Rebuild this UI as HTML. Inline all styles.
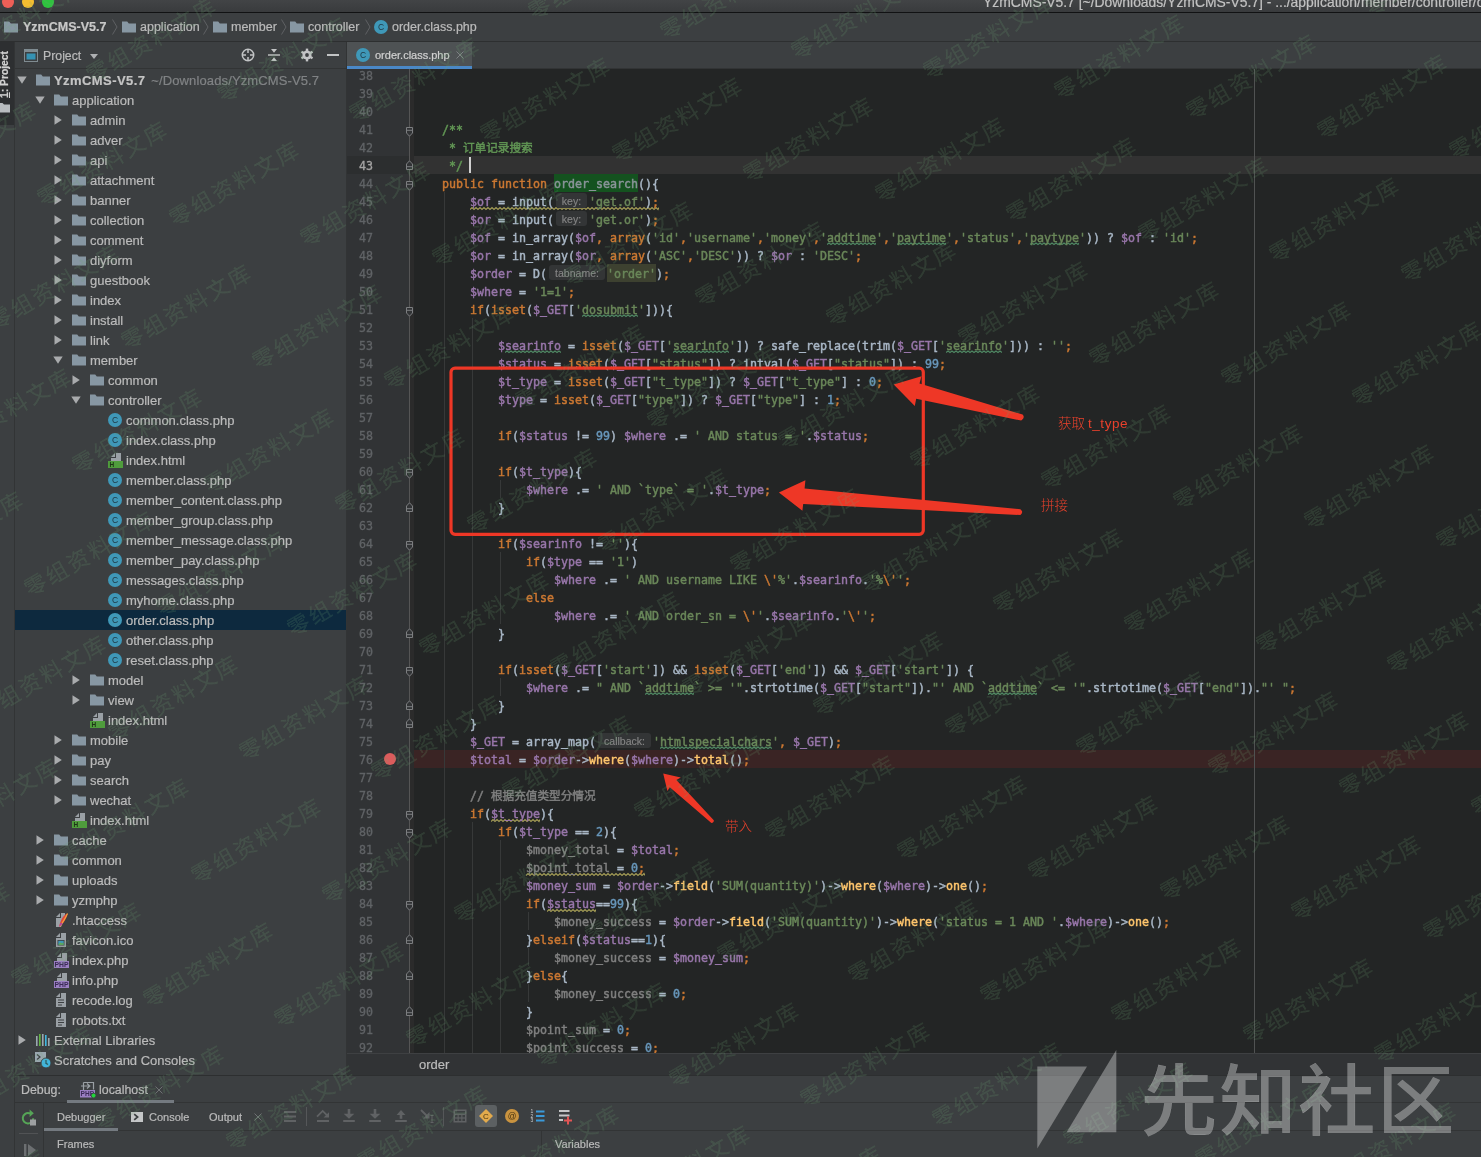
<!DOCTYPE html><html><head><meta charset="utf-8"><title>order.class.php</title><style>
html,body{margin:0;padding:0}
body{width:1481px;height:1157px;overflow:hidden;background:#3c3f41;position:relative;font-family:"Liberation Sans","Noto Sans CJK SC",sans-serif;font-size:13px;color:#bbbbbb;-webkit-text-stroke:0.2px}
div,span,svg{box-sizing:border-box}
.a{position:absolute}
#root{left:0;top:0;width:1481px;height:1157px;overflow:hidden;will-change:transform}
#title{left:0;top:0;width:1481px;height:12px;background:linear-gradient(#424446,#393b3d)}
#titleline{left:0;top:12px;width:1481px;height:1px;background:#111213}
#titletxt{left:983px;top:-6.5px;font-size:13.9px;color:#c2c2c2;white-space:nowrap}
.tl{position:absolute;width:12px;height:12px;border-radius:6px;top:-4px}
#nav{left:0;top:13px;width:1481px;height:28px;background:#3c3f41}
#navline{left:0;top:41px;width:1481px;height:1px;background:#2d2f30}
.crumb{position:absolute;top:0;height:28px;line-height:28px;white-space:nowrap;font-size:12.5px;color:#bbbbbb}
#strip{left:0;top:42px;width:14px;height:1115px;background:#3c3f41}
#stripline{left:14px;top:42px;width:1px;height:1115px;background:#323435}
#stripbtn{left:0;top:42px;width:14px;height:83px;background:#2d2f31}
#striptxt{left:-26px;top:61px;width:62px;height:12px;line-height:12px;font-size:10.3px;font-weight:bold;color:#d0d0d0;transform:rotate(-90deg);white-space:nowrap;text-align:left}
#phead{left:15px;top:42px;width:332px;height:26px;background:#3c3f41}
#pheadline{left:15px;top:68px;width:332px;height:1px;background:#323435}
#tree{left:15px;top:69px;width:332px;height:1006px;overflow:hidden;background:#3c3f41}
.row{position:absolute;left:0;width:331px;height:20px;line-height:20px;white-space:nowrap;color:#bbbbbb;font-size:13px}
.row.sel{background:#0d293e}
.row b{color:#c4c4c4}
.row .path{color:#808385;margin-left:6px;letter-spacing:0.12px}
.arw,.icw,.lbl{position:absolute;top:0;height:20px}
.arw svg,.icw svg{position:absolute;left:0;top:50%;transform:translateY(-50%)}
.lbl{top:1px}
.lbl b{letter-spacing:0.42px}
#split{left:346px;top:42px;width:1px;height:1033px;background:#323435}
#tabs{left:347px;top:42px;width:1134px;height:27px;background:#3c3f41}
#tabsline{left:347px;top:68px;width:1134px;height:1px;background:#323435}
#tab{left:347px;top:42px;width:125px;height:24px;background:#4e5254}
#tabul{left:347px;top:66px;width:125px;height:3px;background:#4a88c7}
#tabtxt{left:375px;top:42px;height:26px;line-height:26px;font-size:11px;color:#d2d2d2;white-space:nowrap}
#editor{left:347px;top:69px;width:1134px;height:984px;overflow:hidden;background:#232525}
#gutter{left:0;top:0;width:67px;height:984px;background:#313335}
#foldline{left:62px;top:0;width:1px;height:984px;background:#555555}
#foldstrip{left:63px;top:0;width:4px;height:984px;background:#2b2b2b}
#code{left:67px;top:0;width:1067px;height:984px}
.mono,.ln,.num{font-family:"DejaVu Sans Mono","Liberation Mono","Noto Sans CJK SC",monospace;font-size:11.63px}
.ln{position:absolute;left:0;width:1067px;height:18px;line-height:18px;white-space:pre;color:#a9b7c6;-webkit-text-stroke:0.45px}
.lbg{position:absolute;left:0;width:1067px;height:18px}
.tx{position:relative;top:1px}
.wv{position:absolute;top:0}
.num{position:absolute;left:0;width:26px;text-align:right;height:18px;line-height:18px;color:#606366;-webkit-text-stroke:0.3px}
.num.cur{color:#a4a3a3}
.fold{position:absolute;left:59px}
.guide{position:absolute;width:1px;background:#373939}
#margin{left:840px;top:0;width:1px;height:984px;background:#505252}
.k{color:#cc7832}.v{color:#9876aa}.s{color:#6a8759}.n{color:#6897bb}.f{color:#ffc66d}.d{color:#629755}.c{color:#808080}.g{color:#808080}
.fn{color:#8a9499}
.shl{color:#6a8759}
.hint{display:inline-block;height:15px;margin:0 2px;vertical-align:top;margin-top:0;background:#333536;border-radius:3px;text-align:center;line-height:16px;font-family:"Liberation Sans",sans-serif;font-size:10.5px;color:#858585;-webkit-text-stroke:0.15px}
.hint span{display:inline-block}
.caret{display:inline-block;width:2px;height:16px;background:#d0d0d0;vertical-align:top;margin:0 0 0 6px}
#bc{left:347px;top:1053px;width:1134px;height:22px;background:#313335}
#bcline{left:0;top:0;width:1134px;height:1px;background:#3e4042}
#bctxt{left:72px;top:0;height:22px;line-height:23px;font-size:13px;color:#bbbbbb}
#dbgline0{left:15px;top:1075px;width:1466px;height:1px;background:#2d2f30}
#dbg{left:15px;top:1076px;width:1466px;height:81px;background:#3c3f41}

.dt{color:#bbbbbb;white-space:nowrap}
.ann{-webkit-text-stroke:0;color:#e9412c;font-size:13.5px;line-height:20px;height:20px;white-space:nowrap;font-family:"Liberation Sans","Noto Sans CJK SC",sans-serif;font-weight:300}
#wm{left:0;top:0;width:1481px;height:1157px;overflow:hidden;pointer-events:none}
.wm{position:absolute;width:170px;height:28px;line-height:28px;font-size:22px;letter-spacing:2.6px;white-space:nowrap;color:rgba(110,165,120,0.17);transform-origin:11px 14px;transform:rotate(-30deg);font-family:"Liberation Sans","Noto Sans CJK SC",sans-serif;font-weight:400}
#logotxt{left:1140.5px;top:1046.5px;height:110px;line-height:110px;font-size:77px;letter-spacing:1.9px;color:rgba(255,255,255,0.33);white-space:nowrap;font-family:"Liberation Sans","Noto Sans CJK SC",sans-serif;font-weight:500}
</style></head><body><div id="root" class="a"><div id="title" class="a"></div><div class="tl" style="left:2px;background:#ee5f57"></div><div class="tl" style="left:22px;background:#f5bd30"></div><div class="tl" style="left:42px;background:#2ec33e"></div><div id="titletxt" class="a">YzmCMS-V5.7 [~/Downloads/YzmCMS-V5.7] - .../application/member/controller/order.class.php</div><div id="titleline" class="a"></div><div id="nav" class="a"><span class="a" style="left:4px;top:8px"><svg width="14" height="12" viewBox="0 0 14 12"><path d="M0 0.5H5.2L6.8 2.5H14V11.5H0Z" fill="#8797a3"/></svg></span><span class="crumb" style="left:23px;font-weight:bold;color:#c8c8c8">YzmCMS-V5.7</span><svg class="a" style="left:112px;top:6px" width="6" height="16" viewBox="0 0 6 16"><path d="M0.5 0.5L5 8L0.5 15.5" stroke="#5e6163" fill="none"/></svg><span class="a" style="left:122px;top:8px"><svg width="14" height="12" viewBox="0 0 14 12"><path d="M0 0.5H5.2L6.8 2.5H14V11.5H0Z" fill="#8797a3"/></svg></span><span class="crumb" style="left:140px">application</span><svg class="a" style="left:203px;top:6px" width="6" height="16" viewBox="0 0 6 16"><path d="M0.5 0.5L5 8L0.5 15.5" stroke="#5e6163" fill="none"/></svg><span class="a" style="left:213px;top:8px"><svg width="14" height="12" viewBox="0 0 14 12"><path d="M0 0.5H5.2L6.8 2.5H14V11.5H0Z" fill="#8797a3"/></svg></span><span class="crumb" style="left:231px">member</span><svg class="a" style="left:281px;top:6px" width="6" height="16" viewBox="0 0 6 16"><path d="M0.5 0.5L5 8L0.5 15.5" stroke="#5e6163" fill="none"/></svg><span class="a" style="left:290px;top:8px"><svg width="14" height="12" viewBox="0 0 14 12"><path d="M0 0.5H5.2L6.8 2.5H14V11.5H0Z" fill="#8797a3"/></svg></span><span class="crumb" style="left:308px">controller</span><svg class="a" style="left:365px;top:6px" width="6" height="16" viewBox="0 0 6 16"><path d="M0.5 0.5L5 8L0.5 15.5" stroke="#5e6163" fill="none"/></svg><span class="a" style="left:374px;top:7px"><svg width="14" height="14" viewBox="0 0 14 14"><circle cx="7" cy="7" r="7" fill="#3f98b8"/><text x="7" y="10" font-size="8.5" font-family="Liberation Sans, sans-serif" fill="#1f3540" text-anchor="middle">C</text></svg></span><span class="crumb" style="left:392px">order.class.php</span></div><div id="navline" class="a"></div><div id="strip" class="a"></div><div id="stripbtn" class="a"></div><div id="stripline" class="a"></div><div id="striptxt" class="a"><u>1</u>: Project</div><svg class="a" style="left:-3px;top:103px" width="14" height="10" viewBox="0 0 14 10"><path d="M0 0H5.5L7 1.5H13V9.5H0Z" fill="#b8bcbf"/></svg><div id="phead" class="a"><svg class="a" style="left:9px;top:7px" width="14" height="13" viewBox="0 0 14 13"><rect x="0.5" y="0.5" width="13" height="12" fill="#3c3f41" stroke="#7f8b91"/><rect x="0.5" y="0.5" width="13" height="2.5" fill="#7f8b91"/><rect x="2.5" y="4.5" width="9" height="6" fill="#3592b3"/></svg><span class="a" style="left:28px;top:0;height:26px;line-height:29px;font-size:12.3px;color:#bbbbbb">Project</span><svg class="a" style="left:75px;top:12px" width="8" height="5" viewBox="0 0 8 5"><path d="M0 0H8L4 5Z" fill="#aeb0b2"/></svg><svg class="a" style="left:226px;top:6px" width="14" height="14" viewBox="0 0 14 14"><circle cx="7" cy="7" r="5.7" fill="none" stroke="#c2c4c5" stroke-width="1.5"/><path d="M7 1V5M7 9V13M1 7H5M9 7H13" stroke="#c2c4c5" stroke-width="1.5"/></svg><svg class="a" style="left:252px;top:6px" width="14" height="14" viewBox="0 0 14 14"><path d="M1 7H13" stroke="#c2c4c5" stroke-width="1.4"/><path d="M4 1H10L7 4.8Z M4 13H10L7 9.2Z" fill="#c2c4c5"/></svg><svg class="a" style="left:285px;top:6px" width="14" height="14" viewBox="0 0 14 14"><g fill="#c2c4c5"><circle cx="7" cy="7" r="4.6"/><rect x="5.8" y="0.6" width="2.4" height="12.8"/><rect x="5.8" y="0.6" width="2.4" height="12.8" transform="rotate(60 7 7)"/><rect x="5.8" y="0.6" width="2.4" height="12.8" transform="rotate(120 7 7)"/></g><circle cx="7" cy="7" r="1.9" fill="#3c3f41"/></svg><div class="a" style="left:312px;top:12px;width:12px;height:2px;background:#c2c4c5"></div></div><div id="pheadline" class="a"></div><div id="tree" class="a"><div class="row" style="top:1px"><span class="arw" style="left:2px"><svg class="ar" width="10" height="8" viewBox="0 0 10 8"><path d="M0.3 0.5H9.7L5 7.8Z" fill="#a9abad"/></svg></span><span class="icw" style="left:21px"><svg class="ic" width="14" height="12" viewBox="0 0 14 12"><path d="M0 0.5H5.2L6.8 2.5H14V11.5H0Z" fill="#8797a3"/></svg></span><span class="lbl" style="left:39px"><b>YzmCMS-V5.7</b><span class="path">~/Downloads/YzmCMS-V5.7</span></span></div><div class="row" style="top:21px"><span class="arw" style="left:20px"><svg class="ar" width="10" height="8" viewBox="0 0 10 8"><path d="M0.3 0.5H9.7L5 7.8Z" fill="#a9abad"/></svg></span><span class="icw" style="left:39px"><svg class="ic" width="14" height="12" viewBox="0 0 14 12"><path d="M0 0.5H5.2L6.8 2.5H14V11.5H0Z" fill="#8797a3"/></svg></span><span class="lbl" style="left:57px">application</span></div><div class="row" style="top:41px"><span class="arw" style="left:39px"><svg class="ar" width="8" height="10" viewBox="0 0 8 10"><path d="M0.5 0.3V9.7L7.8 5Z" fill="#a9abad"/></svg></span><span class="icw" style="left:57px"><svg class="ic" width="14" height="12" viewBox="0 0 14 12"><path d="M0 0.5H5.2L6.8 2.5H14V11.5H0Z" fill="#8797a3"/></svg></span><span class="lbl" style="left:75px">admin</span></div><div class="row" style="top:61px"><span class="arw" style="left:39px"><svg class="ar" width="8" height="10" viewBox="0 0 8 10"><path d="M0.5 0.3V9.7L7.8 5Z" fill="#a9abad"/></svg></span><span class="icw" style="left:57px"><svg class="ic" width="14" height="12" viewBox="0 0 14 12"><path d="M0 0.5H5.2L6.8 2.5H14V11.5H0Z" fill="#8797a3"/></svg></span><span class="lbl" style="left:75px">adver</span></div><div class="row" style="top:81px"><span class="arw" style="left:39px"><svg class="ar" width="8" height="10" viewBox="0 0 8 10"><path d="M0.5 0.3V9.7L7.8 5Z" fill="#a9abad"/></svg></span><span class="icw" style="left:57px"><svg class="ic" width="14" height="12" viewBox="0 0 14 12"><path d="M0 0.5H5.2L6.8 2.5H14V11.5H0Z" fill="#8797a3"/></svg></span><span class="lbl" style="left:75px">api</span></div><div class="row" style="top:101px"><span class="arw" style="left:39px"><svg class="ar" width="8" height="10" viewBox="0 0 8 10"><path d="M0.5 0.3V9.7L7.8 5Z" fill="#a9abad"/></svg></span><span class="icw" style="left:57px"><svg class="ic" width="14" height="12" viewBox="0 0 14 12"><path d="M0 0.5H5.2L6.8 2.5H14V11.5H0Z" fill="#8797a3"/></svg></span><span class="lbl" style="left:75px">attachment</span></div><div class="row" style="top:121px"><span class="arw" style="left:39px"><svg class="ar" width="8" height="10" viewBox="0 0 8 10"><path d="M0.5 0.3V9.7L7.8 5Z" fill="#a9abad"/></svg></span><span class="icw" style="left:57px"><svg class="ic" width="14" height="12" viewBox="0 0 14 12"><path d="M0 0.5H5.2L6.8 2.5H14V11.5H0Z" fill="#8797a3"/></svg></span><span class="lbl" style="left:75px">banner</span></div><div class="row" style="top:141px"><span class="arw" style="left:39px"><svg class="ar" width="8" height="10" viewBox="0 0 8 10"><path d="M0.5 0.3V9.7L7.8 5Z" fill="#a9abad"/></svg></span><span class="icw" style="left:57px"><svg class="ic" width="14" height="12" viewBox="0 0 14 12"><path d="M0 0.5H5.2L6.8 2.5H14V11.5H0Z" fill="#8797a3"/></svg></span><span class="lbl" style="left:75px">collection</span></div><div class="row" style="top:161px"><span class="arw" style="left:39px"><svg class="ar" width="8" height="10" viewBox="0 0 8 10"><path d="M0.5 0.3V9.7L7.8 5Z" fill="#a9abad"/></svg></span><span class="icw" style="left:57px"><svg class="ic" width="14" height="12" viewBox="0 0 14 12"><path d="M0 0.5H5.2L6.8 2.5H14V11.5H0Z" fill="#8797a3"/></svg></span><span class="lbl" style="left:75px">comment</span></div><div class="row" style="top:181px"><span class="arw" style="left:39px"><svg class="ar" width="8" height="10" viewBox="0 0 8 10"><path d="M0.5 0.3V9.7L7.8 5Z" fill="#a9abad"/></svg></span><span class="icw" style="left:57px"><svg class="ic" width="14" height="12" viewBox="0 0 14 12"><path d="M0 0.5H5.2L6.8 2.5H14V11.5H0Z" fill="#8797a3"/></svg></span><span class="lbl" style="left:75px">diyform</span></div><div class="row" style="top:201px"><span class="arw" style="left:39px"><svg class="ar" width="8" height="10" viewBox="0 0 8 10"><path d="M0.5 0.3V9.7L7.8 5Z" fill="#a9abad"/></svg></span><span class="icw" style="left:57px"><svg class="ic" width="14" height="12" viewBox="0 0 14 12"><path d="M0 0.5H5.2L6.8 2.5H14V11.5H0Z" fill="#8797a3"/></svg></span><span class="lbl" style="left:75px">guestbook</span></div><div class="row" style="top:221px"><span class="arw" style="left:39px"><svg class="ar" width="8" height="10" viewBox="0 0 8 10"><path d="M0.5 0.3V9.7L7.8 5Z" fill="#a9abad"/></svg></span><span class="icw" style="left:57px"><svg class="ic" width="14" height="12" viewBox="0 0 14 12"><path d="M0 0.5H5.2L6.8 2.5H14V11.5H0Z" fill="#8797a3"/></svg></span><span class="lbl" style="left:75px">index</span></div><div class="row" style="top:241px"><span class="arw" style="left:39px"><svg class="ar" width="8" height="10" viewBox="0 0 8 10"><path d="M0.5 0.3V9.7L7.8 5Z" fill="#a9abad"/></svg></span><span class="icw" style="left:57px"><svg class="ic" width="14" height="12" viewBox="0 0 14 12"><path d="M0 0.5H5.2L6.8 2.5H14V11.5H0Z" fill="#8797a3"/></svg></span><span class="lbl" style="left:75px">install</span></div><div class="row" style="top:261px"><span class="arw" style="left:39px"><svg class="ar" width="8" height="10" viewBox="0 0 8 10"><path d="M0.5 0.3V9.7L7.8 5Z" fill="#a9abad"/></svg></span><span class="icw" style="left:57px"><svg class="ic" width="14" height="12" viewBox="0 0 14 12"><path d="M0 0.5H5.2L6.8 2.5H14V11.5H0Z" fill="#8797a3"/></svg></span><span class="lbl" style="left:75px">link</span></div><div class="row" style="top:281px"><span class="arw" style="left:38px"><svg class="ar" width="10" height="8" viewBox="0 0 10 8"><path d="M0.3 0.5H9.7L5 7.8Z" fill="#a9abad"/></svg></span><span class="icw" style="left:57px"><svg class="ic" width="14" height="12" viewBox="0 0 14 12"><path d="M0 0.5H5.2L6.8 2.5H14V11.5H0Z" fill="#8797a3"/></svg></span><span class="lbl" style="left:75px">member</span></div><div class="row" style="top:301px"><span class="arw" style="left:57px"><svg class="ar" width="8" height="10" viewBox="0 0 8 10"><path d="M0.5 0.3V9.7L7.8 5Z" fill="#a9abad"/></svg></span><span class="icw" style="left:75px"><svg class="ic" width="14" height="12" viewBox="0 0 14 12"><path d="M0 0.5H5.2L6.8 2.5H14V11.5H0Z" fill="#8797a3"/></svg></span><span class="lbl" style="left:93px">common</span></div><div class="row" style="top:321px"><span class="arw" style="left:56px"><svg class="ar" width="10" height="8" viewBox="0 0 10 8"><path d="M0.3 0.5H9.7L5 7.8Z" fill="#a9abad"/></svg></span><span class="icw" style="left:75px"><svg class="ic" width="14" height="12" viewBox="0 0 14 12"><path d="M0 0.5H5.2L6.8 2.5H14V11.5H0Z" fill="#8797a3"/></svg></span><span class="lbl" style="left:93px">controller</span></div><div class="row" style="top:341px"><span class="icw" style="left:93px"><svg class="ic" width="14" height="14" viewBox="0 0 14 14"><circle cx="7" cy="7" r="7" fill="#3f98b8"/><text x="7" y="10" font-size="8.5" font-family="Liberation Sans, sans-serif" fill="#1f3540" text-anchor="middle">C</text></svg></span><span class="lbl" style="left:111px">common.class.php</span></div><div class="row" style="top:361px"><span class="icw" style="left:93px"><svg class="ic" width="14" height="14" viewBox="0 0 14 14"><circle cx="7" cy="7" r="7" fill="#3f98b8"/><text x="7" y="10" font-size="8.5" font-family="Liberation Sans, sans-serif" fill="#1f3540" text-anchor="middle">C</text></svg></span><span class="lbl" style="left:111px">index.class.php</span></div><div class="row" style="top:381px"><span class="icw" style="left:93px"><svg class="ic" width="16" height="16" viewBox="0 0 16 16"><path d="M8 1H13V10H3V6H8Z" fill="#9aa0a5"/><path d="M3 5L7 1V5Z" fill="#9aa0a5"/><rect x="0" y="9" width="15" height="7" fill="#4f9c3c"/><text x="1.5" y="15" font-size="6.5" font-weight="bold" font-family="Liberation Sans, sans-serif" fill="#1e3317">H</text></svg></span><span class="lbl" style="left:111px">index.html</span></div><div class="row" style="top:401px"><span class="icw" style="left:93px"><svg class="ic" width="14" height="14" viewBox="0 0 14 14"><circle cx="7" cy="7" r="7" fill="#3f98b8"/><text x="7" y="10" font-size="8.5" font-family="Liberation Sans, sans-serif" fill="#1f3540" text-anchor="middle">C</text></svg></span><span class="lbl" style="left:111px">member.class.php</span></div><div class="row" style="top:421px"><span class="icw" style="left:93px"><svg class="ic" width="14" height="14" viewBox="0 0 14 14"><circle cx="7" cy="7" r="7" fill="#3f98b8"/><text x="7" y="10" font-size="8.5" font-family="Liberation Sans, sans-serif" fill="#1f3540" text-anchor="middle">C</text></svg></span><span class="lbl" style="left:111px">member_content.class.php</span></div><div class="row" style="top:441px"><span class="icw" style="left:93px"><svg class="ic" width="14" height="14" viewBox="0 0 14 14"><circle cx="7" cy="7" r="7" fill="#3f98b8"/><text x="7" y="10" font-size="8.5" font-family="Liberation Sans, sans-serif" fill="#1f3540" text-anchor="middle">C</text></svg></span><span class="lbl" style="left:111px">member_group.class.php</span></div><div class="row" style="top:461px"><span class="icw" style="left:93px"><svg class="ic" width="14" height="14" viewBox="0 0 14 14"><circle cx="7" cy="7" r="7" fill="#3f98b8"/><text x="7" y="10" font-size="8.5" font-family="Liberation Sans, sans-serif" fill="#1f3540" text-anchor="middle">C</text></svg></span><span class="lbl" style="left:111px">member_message.class.php</span></div><div class="row" style="top:481px"><span class="icw" style="left:93px"><svg class="ic" width="14" height="14" viewBox="0 0 14 14"><circle cx="7" cy="7" r="7" fill="#3f98b8"/><text x="7" y="10" font-size="8.5" font-family="Liberation Sans, sans-serif" fill="#1f3540" text-anchor="middle">C</text></svg></span><span class="lbl" style="left:111px">member_pay.class.php</span></div><div class="row" style="top:501px"><span class="icw" style="left:93px"><svg class="ic" width="14" height="14" viewBox="0 0 14 14"><circle cx="7" cy="7" r="7" fill="#3f98b8"/><text x="7" y="10" font-size="8.5" font-family="Liberation Sans, sans-serif" fill="#1f3540" text-anchor="middle">C</text></svg></span><span class="lbl" style="left:111px">messages.class.php</span></div><div class="row" style="top:521px"><span class="icw" style="left:93px"><svg class="ic" width="14" height="14" viewBox="0 0 14 14"><circle cx="7" cy="7" r="7" fill="#3f98b8"/><text x="7" y="10" font-size="8.5" font-family="Liberation Sans, sans-serif" fill="#1f3540" text-anchor="middle">C</text></svg></span><span class="lbl" style="left:111px">myhome.class.php</span></div><div class="row sel" style="top:541px"><span class="icw" style="left:93px"><svg class="ic" width="14" height="14" viewBox="0 0 14 14"><circle cx="7" cy="7" r="7" fill="#3f98b8"/><text x="7" y="10" font-size="8.5" font-family="Liberation Sans, sans-serif" fill="#1f3540" text-anchor="middle">C</text></svg></span><span class="lbl" style="left:111px">order.class.php</span></div><div class="row" style="top:561px"><span class="icw" style="left:93px"><svg class="ic" width="14" height="14" viewBox="0 0 14 14"><circle cx="7" cy="7" r="7" fill="#3f98b8"/><text x="7" y="10" font-size="8.5" font-family="Liberation Sans, sans-serif" fill="#1f3540" text-anchor="middle">C</text></svg></span><span class="lbl" style="left:111px">other.class.php</span></div><div class="row" style="top:581px"><span class="icw" style="left:93px"><svg class="ic" width="14" height="14" viewBox="0 0 14 14"><circle cx="7" cy="7" r="7" fill="#3f98b8"/><text x="7" y="10" font-size="8.5" font-family="Liberation Sans, sans-serif" fill="#1f3540" text-anchor="middle">C</text></svg></span><span class="lbl" style="left:111px">reset.class.php</span></div><div class="row" style="top:601px"><span class="arw" style="left:57px"><svg class="ar" width="8" height="10" viewBox="0 0 8 10"><path d="M0.5 0.3V9.7L7.8 5Z" fill="#a9abad"/></svg></span><span class="icw" style="left:75px"><svg class="ic" width="14" height="12" viewBox="0 0 14 12"><path d="M0 0.5H5.2L6.8 2.5H14V11.5H0Z" fill="#8797a3"/></svg></span><span class="lbl" style="left:93px">model</span></div><div class="row" style="top:621px"><span class="arw" style="left:57px"><svg class="ar" width="8" height="10" viewBox="0 0 8 10"><path d="M0.5 0.3V9.7L7.8 5Z" fill="#a9abad"/></svg></span><span class="icw" style="left:75px"><svg class="ic" width="14" height="12" viewBox="0 0 14 12"><path d="M0 0.5H5.2L6.8 2.5H14V11.5H0Z" fill="#8797a3"/></svg></span><span class="lbl" style="left:93px">view</span></div><div class="row" style="top:641px"><span class="icw" style="left:75px"><svg class="ic" width="16" height="16" viewBox="0 0 16 16"><path d="M8 1H13V10H3V6H8Z" fill="#9aa0a5"/><path d="M3 5L7 1V5Z" fill="#9aa0a5"/><rect x="0" y="9" width="15" height="7" fill="#4f9c3c"/><text x="1.5" y="15" font-size="6.5" font-weight="bold" font-family="Liberation Sans, sans-serif" fill="#1e3317">H</text></svg></span><span class="lbl" style="left:93px">index.html</span></div><div class="row" style="top:661px"><span class="arw" style="left:39px"><svg class="ar" width="8" height="10" viewBox="0 0 8 10"><path d="M0.5 0.3V9.7L7.8 5Z" fill="#a9abad"/></svg></span><span class="icw" style="left:57px"><svg class="ic" width="14" height="12" viewBox="0 0 14 12"><path d="M0 0.5H5.2L6.8 2.5H14V11.5H0Z" fill="#8797a3"/></svg></span><span class="lbl" style="left:75px">mobile</span></div><div class="row" style="top:681px"><span class="arw" style="left:39px"><svg class="ar" width="8" height="10" viewBox="0 0 8 10"><path d="M0.5 0.3V9.7L7.8 5Z" fill="#a9abad"/></svg></span><span class="icw" style="left:57px"><svg class="ic" width="14" height="12" viewBox="0 0 14 12"><path d="M0 0.5H5.2L6.8 2.5H14V11.5H0Z" fill="#8797a3"/></svg></span><span class="lbl" style="left:75px">pay</span></div><div class="row" style="top:701px"><span class="arw" style="left:39px"><svg class="ar" width="8" height="10" viewBox="0 0 8 10"><path d="M0.5 0.3V9.7L7.8 5Z" fill="#a9abad"/></svg></span><span class="icw" style="left:57px"><svg class="ic" width="14" height="12" viewBox="0 0 14 12"><path d="M0 0.5H5.2L6.8 2.5H14V11.5H0Z" fill="#8797a3"/></svg></span><span class="lbl" style="left:75px">search</span></div><div class="row" style="top:721px"><span class="arw" style="left:39px"><svg class="ar" width="8" height="10" viewBox="0 0 8 10"><path d="M0.5 0.3V9.7L7.8 5Z" fill="#a9abad"/></svg></span><span class="icw" style="left:57px"><svg class="ic" width="14" height="12" viewBox="0 0 14 12"><path d="M0 0.5H5.2L6.8 2.5H14V11.5H0Z" fill="#8797a3"/></svg></span><span class="lbl" style="left:75px">wechat</span></div><div class="row" style="top:741px"><span class="icw" style="left:57px"><svg class="ic" width="16" height="16" viewBox="0 0 16 16"><path d="M8 1H13V10H3V6H8Z" fill="#9aa0a5"/><path d="M3 5L7 1V5Z" fill="#9aa0a5"/><rect x="0" y="9" width="15" height="7" fill="#4f9c3c"/><text x="1.5" y="15" font-size="6.5" font-weight="bold" font-family="Liberation Sans, sans-serif" fill="#1e3317">H</text></svg></span><span class="lbl" style="left:75px">index.html</span></div><div class="row" style="top:761px"><span class="arw" style="left:21px"><svg class="ar" width="8" height="10" viewBox="0 0 8 10"><path d="M0.5 0.3V9.7L7.8 5Z" fill="#a9abad"/></svg></span><span class="icw" style="left:39px"><svg class="ic" width="14" height="12" viewBox="0 0 14 12"><path d="M0 0.5H5.2L6.8 2.5H14V11.5H0Z" fill="#8797a3"/></svg></span><span class="lbl" style="left:57px">cache</span></div><div class="row" style="top:781px"><span class="arw" style="left:21px"><svg class="ar" width="8" height="10" viewBox="0 0 8 10"><path d="M0.5 0.3V9.7L7.8 5Z" fill="#a9abad"/></svg></span><span class="icw" style="left:39px"><svg class="ic" width="14" height="12" viewBox="0 0 14 12"><path d="M0 0.5H5.2L6.8 2.5H14V11.5H0Z" fill="#8797a3"/></svg></span><span class="lbl" style="left:57px">common</span></div><div class="row" style="top:801px"><span class="arw" style="left:21px"><svg class="ar" width="8" height="10" viewBox="0 0 8 10"><path d="M0.5 0.3V9.7L7.8 5Z" fill="#a9abad"/></svg></span><span class="icw" style="left:39px"><svg class="ic" width="14" height="12" viewBox="0 0 14 12"><path d="M0 0.5H5.2L6.8 2.5H14V11.5H0Z" fill="#8797a3"/></svg></span><span class="lbl" style="left:57px">uploads</span></div><div class="row" style="top:821px"><span class="arw" style="left:21px"><svg class="ar" width="8" height="10" viewBox="0 0 8 10"><path d="M0.5 0.3V9.7L7.8 5Z" fill="#a9abad"/></svg></span><span class="icw" style="left:39px"><svg class="ic" width="14" height="12" viewBox="0 0 14 12"><path d="M0 0.5H5.2L6.8 2.5H14V11.5H0Z" fill="#8797a3"/></svg></span><span class="lbl" style="left:57px">yzmphp</span></div><div class="row" style="top:841px"><span class="icw" style="left:38px"><svg class="ic" width="16" height="16" viewBox="0 0 16 16"><path d="M8 1H12V6L8 15H3V6H8Z" fill="#9aa0a5"/><path d="M3 5L7 1V5Z" fill="#9aa0a5"/><path d="M14.5 1.5C11 2.5 8 7 6 14.5L7.5 14C10 11.5 13.5 7 14.5 1.5Z" fill="#e0453a"/><path d="M14.5 1.5C13 5 10 10 7 14.3" stroke="#f3a43b" stroke-width="1.2" fill="none"/><path d="M6 14.5L7.5 14C8.5 12.8 9.3 12 10 11L7.5 11Z" fill="#b3479c"/></svg></span><span class="lbl" style="left:57px">.htaccess</span></div><div class="row" style="top:861px"><span class="icw" style="left:38px"><svg class="ic" width="16" height="16" viewBox="0 0 16 16"><path d="M8 1H13V15H3V6H8Z" fill="#9aa0a5"/><path d="M3 5L7 1V5Z" fill="#9aa0a5"/><rect x="4.5" y="8" width="7" height="5.5" fill="#3c3f41"/><rect x="5.3" y="8.8" width="5.4" height="3.9" fill="#3f98b8"/><path d="M5.3 12.7L7.3 10.5L8.6 11.6L9.6 10.8L10.7 12V12.7Z" fill="#5fae48"/></svg></span><span class="lbl" style="left:57px">favicon.ico</span></div><div class="row" style="top:881px"><span class="icw" style="left:39px"><svg class="ic" width="16" height="16" viewBox="0 0 16 16"><path d="M8 1H13V10H3V6H8Z" fill="#9aa0a5"/><path d="M3 5L7 1V5Z" fill="#9aa0a5"/><rect x="0" y="9" width="15" height="7" fill="#9a7fc2"/><text x="0.5" y="15" font-size="6.5" font-weight="bold" font-family="Liberation Sans, sans-serif" fill="#3a2a55" textLength="14" lengthAdjust="spacingAndGlyphs">PHP</text></svg></span><span class="lbl" style="left:57px">index.php</span></div><div class="row" style="top:901px"><span class="icw" style="left:39px"><svg class="ic" width="16" height="16" viewBox="0 0 16 16"><path d="M8 1H13V10H3V6H8Z" fill="#9aa0a5"/><path d="M3 5L7 1V5Z" fill="#9aa0a5"/><rect x="0" y="9" width="15" height="7" fill="#9a7fc2"/><text x="0.5" y="15" font-size="6.5" font-weight="bold" font-family="Liberation Sans, sans-serif" fill="#3a2a55" textLength="14" lengthAdjust="spacingAndGlyphs">PHP</text></svg></span><span class="lbl" style="left:57px">info.php</span></div><div class="row" style="top:921px"><span class="icw" style="left:38px"><svg class="ic" width="16" height="16" viewBox="0 0 16 16"><path d="M8 1H13V15H3V6H8Z" fill="#9aa0a5"/><path d="M3 5L7 1V5Z" fill="#9aa0a5"/><path d="M5 8H11M5 10.5H11M5 13H9" stroke="#3c3f41" stroke-width="1"/></svg></span><span class="lbl" style="left:57px">recode.log</span></div><div class="row" style="top:941px"><span class="icw" style="left:38px"><svg class="ic" width="16" height="16" viewBox="0 0 16 16"><path d="M8 1H13V15H3V6H8Z" fill="#9aa0a5"/><path d="M3 5L7 1V5Z" fill="#9aa0a5"/><path d="M5 8H11M5 10.5H11M5 13H9" stroke="#3c3f41" stroke-width="1"/></svg></span><span class="lbl" style="left:57px">robots.txt</span></div><div class="row" style="top:961px"><span class="arw" style="left:3px"><svg class="ar" width="8" height="10" viewBox="0 0 8 10"><path d="M0.5 0.3V9.7L7.8 5Z" fill="#a9abad"/></svg></span><span class="icw" style="left:20px"><svg class="ic" width="16" height="16" viewBox="0 0 16 16"><rect x="1" y="4" width="1.6" height="10" fill="#9aa7b0"/><rect x="4" y="2" width="1.6" height="12" fill="#62b543"/><rect x="7" y="2" width="1.6" height="12" fill="#9aa7b0"/><rect x="10" y="3" width="1.6" height="11" fill="#40b6e0"/><rect x="13" y="6" width="1.6" height="8" fill="#9aa7b0"/></svg></span><span class="lbl" style="left:39px">External Libraries</span></div><div class="row" style="top:981px"><span class="icw" style="left:20px"><svg class="ic" width="16" height="16" viewBox="0 0 16 16"><rect x="0" y="0" width="11" height="10" fill="#9aa7b0"/><path d="M2 2.5L5 5L2 7.5" stroke="#3c3f41" stroke-width="1.2" fill="none"/><circle cx="11" cy="11" r="5" fill="#40b6e0" stroke="#3c3f41" stroke-width="1"/><path d="M11 8V11.3L13 12.5" stroke="#1d4a5c" stroke-width="1.2" fill="none"/></svg></span><span class="lbl" style="left:39px">Scratches and Consoles</span></div></div><div id="split" class="a"></div><div id="tabs" class="a"></div><div id="tabsline" class="a"></div><div id="tab" class="a"></div><div id="tabul" class="a"></div><span class="a" style="left:356px;top:48px"><svg width="14" height="14" viewBox="0 0 14 14"><circle cx="7" cy="7" r="7" fill="#3f98b8"/><text x="7" y="10" font-size="8.5" font-family="Liberation Sans, sans-serif" fill="#1f3540" text-anchor="middle">C</text></svg></span><div id="tabtxt" class="a">order.class.php</div><svg class="a" style="left:456px;top:51px" width="8" height="8" viewBox="0 0 8 8"><path d="M0.5 0.5L7.5 7.5M7.5 0.5L0.5 7.5" stroke="#7e8284" stroke-width="1"/></svg><div id="editor" class="a"><div id="gutter" class="a"><div class="a" style="left:0;top:87px;width:67px;height:18px;background:#2c2e2f"></div><div class="num" style="top:-3px"><span class="tx">38</span></div><div class="num" style="top:15px"><span class="tx">39</span></div><div class="num" style="top:33px"><span class="tx">40</span></div><div class="num" style="top:51px"><span class="tx">41</span></div><div class="num" style="top:69px"><span class="tx">42</span></div><div class="num cur" style="top:87px"><span class="tx">43</span></div><div class="num" style="top:105px"><span class="tx">44</span></div><div class="num" style="top:123px"><span class="tx">45</span></div><div class="num" style="top:141px"><span class="tx">46</span></div><div class="num" style="top:159px"><span class="tx">47</span></div><div class="num" style="top:177px"><span class="tx">48</span></div><div class="num" style="top:195px"><span class="tx">49</span></div><div class="num" style="top:213px"><span class="tx">50</span></div><div class="num" style="top:231px"><span class="tx">51</span></div><div class="num" style="top:249px"><span class="tx">52</span></div><div class="num" style="top:267px"><span class="tx">53</span></div><div class="num" style="top:285px"><span class="tx">54</span></div><div class="num" style="top:303px"><span class="tx">55</span></div><div class="num" style="top:321px"><span class="tx">56</span></div><div class="num" style="top:339px"><span class="tx">57</span></div><div class="num" style="top:357px"><span class="tx">58</span></div><div class="num" style="top:375px"><span class="tx">59</span></div><div class="num" style="top:393px"><span class="tx">60</span></div><div class="num" style="top:411px"><span class="tx">61</span></div><div class="num" style="top:429px"><span class="tx">62</span></div><div class="num" style="top:447px"><span class="tx">63</span></div><div class="num" style="top:465px"><span class="tx">64</span></div><div class="num" style="top:483px"><span class="tx">65</span></div><div class="num" style="top:501px"><span class="tx">66</span></div><div class="num" style="top:519px"><span class="tx">67</span></div><div class="num" style="top:537px"><span class="tx">68</span></div><div class="num" style="top:555px"><span class="tx">69</span></div><div class="num" style="top:573px"><span class="tx">70</span></div><div class="num" style="top:591px"><span class="tx">71</span></div><div class="num" style="top:609px"><span class="tx">72</span></div><div class="num" style="top:627px"><span class="tx">73</span></div><div class="num" style="top:645px"><span class="tx">74</span></div><div class="num" style="top:663px"><span class="tx">75</span></div><div class="num" style="top:681px"><span class="tx">76</span></div><div class="num" style="top:699px"><span class="tx">77</span></div><div class="num" style="top:717px"><span class="tx">78</span></div><div class="num" style="top:735px"><span class="tx">79</span></div><div class="num" style="top:753px"><span class="tx">80</span></div><div class="num" style="top:771px"><span class="tx">81</span></div><div class="num" style="top:789px"><span class="tx">82</span></div><div class="num" style="top:807px"><span class="tx">83</span></div><div class="num" style="top:825px"><span class="tx">84</span></div><div class="num" style="top:843px"><span class="tx">85</span></div><div class="num" style="top:861px"><span class="tx">86</span></div><div class="num" style="top:879px"><span class="tx">87</span></div><div class="num" style="top:897px"><span class="tx">88</span></div><div class="num" style="top:915px"><span class="tx">89</span></div><div class="num" style="top:933px"><span class="tx">90</span></div><div class="num" style="top:951px"><span class="tx">91</span></div><div class="num" style="top:969px"><span class="tx">92</span></div><div id="foldstrip" class="a"></div><div id="foldline" class="a"></div><svg class="fold" style="top:58px" width="7" height="10" viewBox="0 0 7 10"><path d="M0.5 0.5H6.5V6L3.5 9.2L0.5 6Z" fill="#313335" stroke="#7c7e80"/><path d="M0.5 3.3H6.5" stroke="#7c7e80"/></svg><svg class="fold" style="top:91px" width="7" height="10" viewBox="0 0 7 10"><path d="M0.5 9.5H6.5V4L3.5 0.8L0.5 4Z" fill="#313335" stroke="#7c7e80"/><path d="M0.5 6.7H6.5" stroke="#7c7e80"/></svg><svg class="fold" style="top:112px" width="7" height="10" viewBox="0 0 7 10"><path d="M0.5 0.5H6.5V6L3.5 9.2L0.5 6Z" fill="#313335" stroke="#7c7e80"/><path d="M0.5 3.3H6.5" stroke="#7c7e80"/></svg><svg class="fold" style="top:238px" width="7" height="10" viewBox="0 0 7 10"><path d="M0.5 0.5H6.5V6L3.5 9.2L0.5 6Z" fill="#313335" stroke="#7c7e80"/><path d="M0.5 3.3H6.5" stroke="#7c7e80"/></svg><svg class="fold" style="top:400px" width="7" height="10" viewBox="0 0 7 10"><path d="M0.5 0.5H6.5V6L3.5 9.2L0.5 6Z" fill="#313335" stroke="#7c7e80"/><path d="M0.5 3.3H6.5" stroke="#7c7e80"/></svg><svg class="fold" style="top:433px" width="7" height="10" viewBox="0 0 7 10"><path d="M0.5 9.5H6.5V4L3.5 0.8L0.5 4Z" fill="#313335" stroke="#7c7e80"/><path d="M0.5 6.7H6.5" stroke="#7c7e80"/></svg><svg class="fold" style="top:472px" width="7" height="10" viewBox="0 0 7 10"><path d="M0.5 0.5H6.5V6L3.5 9.2L0.5 6Z" fill="#313335" stroke="#7c7e80"/><path d="M0.5 3.3H6.5" stroke="#7c7e80"/></svg><svg class="fold" style="top:559px" width="7" height="10" viewBox="0 0 7 10"><path d="M0.5 9.5H6.5V4L3.5 0.8L0.5 4Z" fill="#313335" stroke="#7c7e80"/><path d="M0.5 6.7H6.5" stroke="#7c7e80"/></svg><svg class="fold" style="top:598px" width="7" height="10" viewBox="0 0 7 10"><path d="M0.5 0.5H6.5V6L3.5 9.2L0.5 6Z" fill="#313335" stroke="#7c7e80"/><path d="M0.5 3.3H6.5" stroke="#7c7e80"/></svg><svg class="fold" style="top:631px" width="7" height="10" viewBox="0 0 7 10"><path d="M0.5 9.5H6.5V4L3.5 0.8L0.5 4Z" fill="#313335" stroke="#7c7e80"/><path d="M0.5 6.7H6.5" stroke="#7c7e80"/></svg><svg class="fold" style="top:649px" width="7" height="10" viewBox="0 0 7 10"><path d="M0.5 9.5H6.5V4L3.5 0.8L0.5 4Z" fill="#313335" stroke="#7c7e80"/><path d="M0.5 6.7H6.5" stroke="#7c7e80"/></svg><svg class="fold" style="top:742px" width="7" height="10" viewBox="0 0 7 10"><path d="M0.5 0.5H6.5V6L3.5 9.2L0.5 6Z" fill="#313335" stroke="#7c7e80"/><path d="M0.5 3.3H6.5" stroke="#7c7e80"/></svg><svg class="fold" style="top:760px" width="7" height="10" viewBox="0 0 7 10"><path d="M0.5 0.5H6.5V6L3.5 9.2L0.5 6Z" fill="#313335" stroke="#7c7e80"/><path d="M0.5 3.3H6.5" stroke="#7c7e80"/></svg><svg class="fold" style="top:832px" width="7" height="10" viewBox="0 0 7 10"><path d="M0.5 0.5H6.5V6L3.5 9.2L0.5 6Z" fill="#313335" stroke="#7c7e80"/><path d="M0.5 3.3H6.5" stroke="#7c7e80"/></svg><svg class="fold" style="top:865px" width="7" height="10" viewBox="0 0 7 10"><path d="M0.5 9.5H6.5V4L3.5 0.8L0.5 4Z" fill="#313335" stroke="#7c7e80"/><path d="M0.5 6.7H6.5" stroke="#7c7e80"/></svg><svg class="fold" style="top:901px" width="7" height="10" viewBox="0 0 7 10"><path d="M0.5 9.5H6.5V4L3.5 0.8L0.5 4Z" fill="#313335" stroke="#7c7e80"/><path d="M0.5 6.7H6.5" stroke="#7c7e80"/></svg><svg class="fold" style="top:937px" width="7" height="10" viewBox="0 0 7 10"><path d="M0.5 9.5H6.5V4L3.5 0.8L0.5 4Z" fill="#313335" stroke="#7c7e80"/><path d="M0.5 6.7H6.5" stroke="#7c7e80"/></svg><div class="a" style="left:37px;top:684px;width:12px;height:12px;border-radius:6px;background:#db5c5c"></div></div><div id="code" class="a"><div class="lbg" style="top:87px;background:#323232"></div><div class="lbg" style="top:681px;background:#3a2424"></div><div class="a" style="left:140px;top:105px;width:84px;height:18px;background:#14521f"></div><div class="a" style="left:193px;top:195px;width:49px;height:18px;background:#3d4130"></div><div class="guide" style="left:30px;top:123px;height:864px"></div><div class="guide" style="left:58px;top:249px;height:396px"></div><div class="guide" style="left:58px;top:753px;height:234px"></div><div class="guide" style="left:86px;top:411px;height:18px"></div><div class="guide" style="left:86px;top:483px;height:72px"></div><div class="guide" style="left:86px;top:609px;height:18px"></div><div class="guide" style="left:86px;top:771px;height:216px"></div><div class="guide" style="left:114px;top:843px;height:18px"></div><div class="guide" style="left:114px;top:879px;height:18px"></div><div class="guide" style="left:114px;top:915px;height:18px"></div><div class="ln" style="top:-3px"></div><div class="ln" style="top:15px"></div><div class="ln" style="top:33px"></div><div class="ln" style="top:51px"><span class="tx">    <span class="d">/**</span></span></div><div class="ln" style="top:69px"><span class="tx">     <span class="d">* 订单记录搜索</span></span></div><div class="ln" style="top:87px"><span class="tx">     <span class="d">*/</span><span class="caret"></span></span></div><div class="ln" style="top:105px"><span class="tx">    <span class="k">public function </span><span class="fn">order_search</span>(){</span></div><div class="ln" style="top:123px"><svg class="wv" style="left:56px" width="189" height="19" viewBox="0 0 189 19"><path d="M0 17.5 L2 15.5 L4 17.5 L6 15.5 L8 17.5 L10 15.5 L12 17.5 L14 15.5 L16 17.5 L18 15.5 L20 17.5 L22 15.5 L24 17.5 L26 15.5 L28 17.5 L30 15.5 L32 17.5 L34 15.5 L36 17.5 L38 15.5 L40 17.5 L42 15.5 L44 17.5 L46 15.5 L48 17.5 L50 15.5 L52 17.5 L54 15.5 L56 17.5 L58 15.5 L60 17.5 L62 15.5 L64 17.5 L66 15.5 L68 17.5 L70 15.5 L72 17.5 L74 15.5 L76 17.5 L78 15.5 L80 17.5 L82 15.5 L84 17.5 L86 15.5 L88 17.5 L90 15.5 L92 17.5 L94 15.5 L96 17.5 L98 15.5 L100 17.5 L102 15.5 L104 17.5 L106 15.5 L108 17.5 L110 15.5 L112 17.5 L114 15.5 L116 17.5 L118 15.5 L120 17.5 L122 15.5 L124 17.5 L126 15.5 L128 17.5 L130 15.5 L132 17.5 L134 15.5 L136 17.5 L138 15.5 L140 17.5 L142 15.5 L144 17.5 L146 15.5 L148 17.5 L150 15.5 L152 17.5 L154 15.5 L156 17.5 L158 15.5 L160 17.5 L162 15.5 L164 17.5 L166 15.5 L168 17.5 L170 15.5 L172 17.5 L174 15.5 L176 17.5 L178 15.5 L180 17.5 L182 15.5 L184 17.5 L186 15.5 L188 17.5 L189 15.5" fill="none"  stroke="#a39b55" stroke-width="1.15"/></svg><span class="tx">        <span class="v">$of</span> = input(<span class="hint" style="width:31px"><span>key:</span></span><span class="s">'get.of'</span>)<span class="k">;</span></span></div><div class="ln" style="top:141px"><span class="tx">        <span class="v">$or</span> = input(<span class="hint" style="width:31px"><span>key:</span></span><span class="s">'get.or'</span>)<span class="k">;</span></span></div><div class="ln" style="top:159px"><svg class="wv" style="left:413px" width="49" height="19" viewBox="0 0 49 19"><path d="M0 16.5 L2 15 L4 16.5 L6 15 L8 16.5 L10 15 L12 16.5 L14 15 L16 16.5 L18 15 L20 16.5 L22 15 L24 16.5 L26 15 L28 16.5 L30 15 L32 16.5 L34 15 L36 16.5 L38 15 L40 16.5 L42 15 L44 16.5 L46 15 L48 16.5 L49 15" fill="none"  stroke="#4f8763" stroke-width="1.15"/></svg><svg class="wv" style="left:483px" width="49" height="19" viewBox="0 0 49 19"><path d="M0 16.5 L2 15 L4 16.5 L6 15 L8 16.5 L10 15 L12 16.5 L14 15 L16 16.5 L18 15 L20 16.5 L22 15 L24 16.5 L26 15 L28 16.5 L30 15 L32 16.5 L34 15 L36 16.5 L38 15 L40 16.5 L42 15 L44 16.5 L46 15 L48 16.5 L49 15" fill="none"  stroke="#4f8763" stroke-width="1.15"/></svg><svg class="wv" style="left:616px" width="49" height="19" viewBox="0 0 49 19"><path d="M0 16.5 L2 15 L4 16.5 L6 15 L8 16.5 L10 15 L12 16.5 L14 15 L16 16.5 L18 15 L20 16.5 L22 15 L24 16.5 L26 15 L28 16.5 L30 15 L32 16.5 L34 15 L36 16.5 L38 15 L40 16.5 L42 15 L44 16.5 L46 15 L48 16.5 L49 15" fill="none"  stroke="#4f8763" stroke-width="1.15"/></svg><span class="tx">        <span class="v">$of</span> = in_array(<span class="v">$of</span><span class="k">,</span> <span class="k">array</span>(<span class="s">'id'</span><span class="k">,</span><span class="s">'username'</span><span class="k">,</span><span class="s">'money'</span><span class="k">,</span><span class="s">'</span><span class="s">addtime</span><span class="s">'</span><span class="k">,</span><span class="s">'</span><span class="s">paytime</span><span class="s">'</span><span class="k">,</span><span class="s">'status'</span><span class="k">,</span><span class="s">'</span><span class="s">paytype</span><span class="s">'</span>)) ? <span class="v">$of</span> : <span class="s">'id'</span><span class="k">;</span></span></div><div class="ln" style="top:177px"><span class="tx">        <span class="v">$or</span> = in_array(<span class="v">$or</span><span class="k">,</span> <span class="k">array</span>(<span class="s">'ASC'</span><span class="k">,</span><span class="s">'DESC'</span>)) ? <span class="v">$or</span> : <span class="s">'DESC'</span><span class="k">;</span></span></div><div class="ln" style="top:195px"><span class="tx">        <span class="v">$order</span> = D(<span class="hint" style="width:56px"><span>tabname:</span></span><span class="shl">'order'</span>)<span class="k">;</span></span></div><div class="ln" style="top:213px"><span class="tx">        <span class="v">$where</span> = <span class="s">'1=1'</span><span class="k">;</span></span></div><div class="ln" style="top:231px"><svg class="wv" style="left:168px" width="56" height="19" viewBox="0 0 56 19"><path d="M0 16.5 L2 15 L4 16.5 L6 15 L8 16.5 L10 15 L12 16.5 L14 15 L16 16.5 L18 15 L20 16.5 L22 15 L24 16.5 L26 15 L28 16.5 L30 15 L32 16.5 L34 15 L36 16.5 L38 15 L40 16.5 L42 15 L44 16.5 L46 15 L48 16.5 L50 15 L52 16.5 L54 15 L56 16.5" fill="none"  stroke="#4f8763" stroke-width="1.15"/></svg><span class="tx">        <span class="k">if</span>(<span class="k">isset</span>(<span class="v">$_GET</span>[<span class="s">'</span><span class="s">dosubmit</span><span class="s">'</span>])){</span></div><div class="ln" style="top:249px"></div><div class="ln" style="top:267px"><svg class="wv" style="left:91px" width="56" height="19" viewBox="0 0 56 19"><path d="M0 16.5 L2 15 L4 16.5 L6 15 L8 16.5 L10 15 L12 16.5 L14 15 L16 16.5 L18 15 L20 16.5 L22 15 L24 16.5 L26 15 L28 16.5 L30 15 L32 16.5 L34 15 L36 16.5 L38 15 L40 16.5 L42 15 L44 16.5 L46 15 L48 16.5 L50 15 L52 16.5 L54 15 L56 16.5" fill="none"  stroke="#4f8763" stroke-width="1.15"/></svg><svg class="wv" style="left:259px" width="56" height="19" viewBox="0 0 56 19"><path d="M0 16.5 L2 15 L4 16.5 L6 15 L8 16.5 L10 15 L12 16.5 L14 15 L16 16.5 L18 15 L20 16.5 L22 15 L24 16.5 L26 15 L28 16.5 L30 15 L32 16.5 L34 15 L36 16.5 L38 15 L40 16.5 L42 15 L44 16.5 L46 15 L48 16.5 L50 15 L52 16.5 L54 15 L56 16.5" fill="none"  stroke="#4f8763" stroke-width="1.15"/></svg><svg class="wv" style="left:532px" width="56" height="19" viewBox="0 0 56 19"><path d="M0 16.5 L2 15 L4 16.5 L6 15 L8 16.5 L10 15 L12 16.5 L14 15 L16 16.5 L18 15 L20 16.5 L22 15 L24 16.5 L26 15 L28 16.5 L30 15 L32 16.5 L34 15 L36 16.5 L38 15 L40 16.5 L42 15 L44 16.5 L46 15 L48 16.5 L50 15 L52 16.5 L54 15 L56 16.5" fill="none"  stroke="#4f8763" stroke-width="1.15"/></svg><span class="tx">            <span class="v">$</span><span class="v">searinfo</span> = <span class="k">isset</span>(<span class="v">$_GET</span>[<span class="s">'</span><span class="s">searinfo</span><span class="s">'</span>]) ? safe_replace(trim(<span class="v">$_GET</span>[<span class="s">'</span><span class="s">searinfo</span><span class="s">'</span>])) : <span class="s">''</span><span class="k">;</span></span></div><div class="ln" style="top:285px"><span class="tx">            <span class="v">$status</span> = <span class="k">isset</span>(<span class="v">$_GET</span>[<span class="s">"status"</span>]) ? intval(<span class="v">$_GET</span>[<span class="s">"status"</span>]) : <span class="n">99</span><span class="k">;</span></span></div><div class="ln" style="top:303px"><span class="tx">            <span class="v">$t_type</span> = <span class="k">isset</span>(<span class="v">$_GET</span>[<span class="s">"t_type"</span>]) ? <span class="v">$_GET</span>[<span class="s">"t_type"</span>] : <span class="n">0</span><span class="k">;</span></span></div><div class="ln" style="top:321px"><span class="tx">            <span class="v">$type</span> = <span class="k">isset</span>(<span class="v">$_GET</span>[<span class="s">"type"</span>]) ? <span class="v">$_GET</span>[<span class="s">"type"</span>] : <span class="n">1</span><span class="k">;</span></span></div><div class="ln" style="top:339px"></div><div class="ln" style="top:357px"><span class="tx">            <span class="k">if</span>(<span class="v">$status</span> != <span class="n">99</span>) <span class="v">$where</span> .= <span class="s">' AND status = '</span>.<span class="v">$status</span><span class="k">;</span></span></div><div class="ln" style="top:375px"></div><div class="ln" style="top:393px"><span class="tx">            <span class="k">if</span>(<span class="v">$t_type</span>){</span></div><div class="ln" style="top:411px"><span class="tx">                <span class="v">$where</span> .= <span class="s">' AND `type` = '</span>.<span class="v">$t_type</span><span class="k">;</span></span></div><div class="ln" style="top:429px"><span class="tx">            }</span></div><div class="ln" style="top:447px"></div><div class="ln" style="top:465px"><span class="tx">            <span class="k">if</span>(<span class="v">$searinfo</span> != <span class="s">''</span>){</span></div><div class="ln" style="top:483px"><span class="tx">                <span class="k">if</span>(<span class="v">$type</span> == <span class="s">'1'</span>)</span></div><div class="ln" style="top:501px"><span class="tx">                    <span class="v">$where</span> .= <span class="s">' AND username LIKE </span><span class="k">\'</span><span class="s">%'</span>.<span class="v">$searinfo</span>.<span class="s">'%</span><span class="k">\'</span><span class="s">'</span><span class="k">;</span></span></div><div class="ln" style="top:519px"><span class="tx">                <span class="k">else</span></span></div><div class="ln" style="top:537px"><span class="tx">                    <span class="v">$where</span> .= <span class="s">' AND order_sn = </span><span class="k">\'</span><span class="s">'</span>.<span class="v">$searinfo</span>.<span class="s">'</span><span class="k">\'</span><span class="s">'</span><span class="k">;</span></span></div><div class="ln" style="top:555px"><span class="tx">            }</span></div><div class="ln" style="top:573px"></div><div class="ln" style="top:591px"><span class="tx">            <span class="k">if</span>(<span class="k">isset</span>(<span class="v">$_GET</span>[<span class="s">'start'</span>]) &amp;&amp; <span class="k">isset</span>(<span class="v">$_GET</span>[<span class="s">'end'</span>]) &amp;&amp; <span class="v">$_GET</span>[<span class="s">'start'</span>]) {</span></div><div class="ln" style="top:609px"><svg class="wv" style="left:231px" width="49" height="19" viewBox="0 0 49 19"><path d="M0 16.5 L2 15 L4 16.5 L6 15 L8 16.5 L10 15 L12 16.5 L14 15 L16 16.5 L18 15 L20 16.5 L22 15 L24 16.5 L26 15 L28 16.5 L30 15 L32 16.5 L34 15 L36 16.5 L38 15 L40 16.5 L42 15 L44 16.5 L46 15 L48 16.5 L49 15" fill="none"  stroke="#4f8763" stroke-width="1.15"/></svg><svg class="wv" style="left:574px" width="49" height="19" viewBox="0 0 49 19"><path d="M0 16.5 L2 15 L4 16.5 L6 15 L8 16.5 L10 15 L12 16.5 L14 15 L16 16.5 L18 15 L20 16.5 L22 15 L24 16.5 L26 15 L28 16.5 L30 15 L32 16.5 L34 15 L36 16.5 L38 15 L40 16.5 L42 15 L44 16.5 L46 15 L48 16.5 L49 15" fill="none"  stroke="#4f8763" stroke-width="1.15"/></svg><span class="tx">                <span class="v">$where</span> .= <span class="s">" AND `</span><span class="s">addtime</span><span class="s">` &gt;= '"</span>.strtotime(<span class="v">$_GET</span>[<span class="s">"start"</span>]).<span class="s">"' AND `</span><span class="s">addtime</span><span class="s">` &lt;= '"</span>.strtotime(<span class="v">$_GET</span>[<span class="s">"end"</span>]).<span class="s">"' "</span><span class="k">;</span></span></div><div class="ln" style="top:627px"><span class="tx">            }</span></div><div class="ln" style="top:645px"><span class="tx">        }</span></div><div class="ln" style="top:663px"><svg class="wv" style="left:246px" width="112" height="19" viewBox="0 0 112 19"><path d="M0 16.5 L2 15 L4 16.5 L6 15 L8 16.5 L10 15 L12 16.5 L14 15 L16 16.5 L18 15 L20 16.5 L22 15 L24 16.5 L26 15 L28 16.5 L30 15 L32 16.5 L34 15 L36 16.5 L38 15 L40 16.5 L42 15 L44 16.5 L46 15 L48 16.5 L50 15 L52 16.5 L54 15 L56 16.5 L58 15 L60 16.5 L62 15 L64 16.5 L66 15 L68 16.5 L70 15 L72 16.5 L74 15 L76 16.5 L78 15 L80 16.5 L82 15 L84 16.5 L86 15 L88 16.5 L90 15 L92 16.5 L94 15 L96 16.5 L98 15 L100 16.5 L102 15 L104 16.5 L106 15 L108 16.5 L110 15 L112 16.5" fill="none"  stroke="#4f8763" stroke-width="1.15"/></svg><span class="tx">        <span class="v">$_GET</span> = array_map(<span class="hint" style="width:53px"><span>callback:</span></span><span class="s">'</span><span class="s">htmlspecialchars</span><span class="s">'</span><span class="k">,</span> <span class="v">$_GET</span>)<span class="k">;</span></span></div><div class="ln" style="top:681px"><span class="tx">        <span class="v">$total</span> = <span class="v">$order</span>-&gt;<span class="f">where</span>(<span class="v">$where</span>)-&gt;<span class="f">total</span>()<span class="k">;</span></span></div><div class="ln" style="top:699px"></div><div class="ln" style="top:717px"><span class="tx">        <span class="c">// 根据充值类型分情况</span></span></div><div class="ln" style="top:735px"><svg class="wv" style="left:77px" width="49" height="19" viewBox="0 0 49 19"><path d="M0 17.5 L2 15.5 L4 17.5 L6 15.5 L8 17.5 L10 15.5 L12 17.5 L14 15.5 L16 17.5 L18 15.5 L20 17.5 L22 15.5 L24 17.5 L26 15.5 L28 17.5 L30 15.5 L32 17.5 L34 15.5 L36 17.5 L38 15.5 L40 17.5 L42 15.5 L44 17.5 L46 15.5 L48 17.5 L49 15.5" fill="none"  stroke="#a39b55" stroke-width="1.15"/></svg><span class="tx">        <span class="k">if</span>(<span class="v">$t_type</span>){</span></div><div class="ln" style="top:753px"><span class="tx">            <span class="k">if</span>(<span class="v">$t_type</span> == <span class="n">2</span>){</span></div><div class="ln" style="top:771px"><span class="tx">                <span class="g">$money_total</span> = <span class="v">$total</span><span class="k">;</span></span></div><div class="ln" style="top:789px"><svg class="wv" style="left:112px" width="119" height="19" viewBox="0 0 119 19"><path d="M0 17.5 L2 15.5 L4 17.5 L6 15.5 L8 17.5 L10 15.5 L12 17.5 L14 15.5 L16 17.5 L18 15.5 L20 17.5 L22 15.5 L24 17.5 L26 15.5 L28 17.5 L30 15.5 L32 17.5 L34 15.5 L36 17.5 L38 15.5 L40 17.5 L42 15.5 L44 17.5 L46 15.5 L48 17.5 L50 15.5 L52 17.5 L54 15.5 L56 17.5 L58 15.5 L60 17.5 L62 15.5 L64 17.5 L66 15.5 L68 17.5 L70 15.5 L72 17.5 L74 15.5 L76 17.5 L78 15.5 L80 17.5 L82 15.5 L84 17.5 L86 15.5 L88 17.5 L90 15.5 L92 17.5 L94 15.5 L96 17.5 L98 15.5 L100 17.5 L102 15.5 L104 17.5 L106 15.5 L108 17.5 L110 15.5 L112 17.5 L114 15.5 L116 17.5 L118 15.5 L119 17.5" fill="none"  stroke="#a39b55" stroke-width="1.15"/></svg><span class="tx">                <span class="g">$point_total</span> = <span class="n">0</span><span class="k">;</span></span></div><div class="ln" style="top:807px"><span class="tx">                <span class="v">$money_sum</span> = <span class="v">$order</span>-&gt;<span class="f">field</span>(<span class="s">'SUM(quantity)'</span>)-&gt;<span class="f">where</span>(<span class="v">$where</span>)-&gt;<span class="f">one</span>()<span class="k">;</span></span></div><div class="ln" style="top:825px"><svg class="wv" style="left:133px" width="49" height="19" viewBox="0 0 49 19"><path d="M0 17.5 L2 15.5 L4 17.5 L6 15.5 L8 17.5 L10 15.5 L12 17.5 L14 15.5 L16 17.5 L18 15.5 L20 17.5 L22 15.5 L24 17.5 L26 15.5 L28 17.5 L30 15.5 L32 17.5 L34 15.5 L36 17.5 L38 15.5 L40 17.5 L42 15.5 L44 17.5 L46 15.5 L48 17.5 L49 15.5" fill="none"  stroke="#a39b55" stroke-width="1.15"/></svg><span class="tx">                <span class="k">if</span>(<span class="v">$status</span>==<span class="n">99</span>){</span></div><div class="ln" style="top:843px"><span class="tx">                    <span class="g">$money_success</span> = <span class="v">$order</span>-&gt;<span class="f">field</span>(<span class="s">'SUM(quantity)'</span>)-&gt;<span class="f">where</span>(<span class="s">'status = 1 AND '</span>.<span class="v">$where</span>)-&gt;<span class="f">one</span>()<span class="k">;</span></span></div><div class="ln" style="top:861px"><span class="tx">                }<span class="k">elseif</span>(<span class="v">$status</span>==<span class="n">1</span>){</span></div><div class="ln" style="top:879px"><span class="tx">                    <span class="g">$money_success</span> = <span class="v">$money_sum</span><span class="k">;</span></span></div><div class="ln" style="top:897px"><span class="tx">                }<span class="k">else</span>{</span></div><div class="ln" style="top:915px"><span class="tx">                    <span class="g">$money_success</span> = <span class="n">0</span><span class="k">;</span></span></div><div class="ln" style="top:933px"><span class="tx">                }</span></div><div class="ln" style="top:951px"><span class="tx">                <span class="g">$point_sum</span> = <span class="n">0</span><span class="k">;</span></span></div><div class="ln" style="top:969px"><span class="tx">                <span class="g">$point_success</span> = <span class="n">0</span><span class="k">;</span></span></div><div id="margin" class="a"></div></div></div><div id="bc" class="a"><div id="bcline" class="a"></div><span id="bctxt" class="a">order</span></div><div id="dbgline0" class="a"></div><div id="dbg" class="a"></div><span class="a dt" style="left:21px;top:1076px;height:27px;line-height:29px;font-size:12.4px">Debug:</span><svg class="a" style="left:80px;top:1081px" width="16" height="17" viewBox="0 0 16 17"><path d="M3.5 1.5H13.5V8.5" fill="none" stroke="#9aa0a5" stroke-width="1.2"/><path d="M3.5 1.5V9" stroke="#9aa0a5" stroke-width="1.2"/><path d="M1 5H9.5M7 2.5L9.8 5L7 7.5" fill="none" stroke="#9aa0a5" stroke-width="1.2"/><rect x="0" y="9" width="15" height="7.5" fill="#9a7fc2"/><text x="0.6" y="15.4" font-size="6.5" font-weight="bold" font-family="Liberation Sans, sans-serif" fill="#3a2a55" textLength="13.5" lengthAdjust="spacingAndGlyphs">PHP</text><circle cx="13.6" cy="14.6" r="2.4" fill="#21d63a" stroke="#3c3f41" stroke-width="0.8"/></svg><span class="a dt" style="left:99px;top:1076px;height:27px;line-height:29px;font-size:12.4px">localhost</span><svg class="a" style="left:155px;top:1086px" width="8" height="8" viewBox="0 0 8 8"><path d="M0.5 0.5L7.5 7.5M7.5 0.5L0.5 7.5" stroke="#6e7173" stroke-width="1"/></svg><div class="a" style="left:15px;top:1102px;width:1466px;height:1px;background:#323435"></div><div class="a" style="left:67px;top:1100px;width:107px;height:3px;background:#747a80"></div><div class="a" style="left:43px;top:1103px;width:1px;height:54px;background:#323435"></div><svg class="a" style="left:21px;top:1109px" width="16" height="17" viewBox="0 0 16 17"><path d="M12.2 9.2A5.2 5.2 0 1 1 8 4.2H10" fill="none" stroke="#56a557" stroke-width="2"/><path d="M8.6 0.5L12.8 4.2L8.6 8Z" fill="#56a557"/><rect x="9" y="10.5" width="6" height="6" fill="#9da0a2"/></svg><div class="a" style="left:19px;top:1133px;width:19px;height:1px;background:#515355"></div><svg class="a" style="left:23px;top:1143px" width="14" height="14" viewBox="0 0 14 14"><rect x="1" y="1" width="2.4" height="12" fill="#6c6f71"/><path d="M5 1L13 7L5 13Z" fill="#6c6f71"/></svg><span class="a dt" style="left:57px;top:1104px;height:26px;line-height:27px;font-size:11px">Debugger</span><svg class="a" style="left:131px;top:1112px" width="12" height="10" viewBox="0 0 12 10"><rect x="0" y="0" width="12" height="10" fill="#c4c6c7"/><path d="M3.2 2.2L6.6 5L3.2 7.8" fill="none" stroke="#3c3f41" stroke-width="1.7"/></svg><span class="a dt" style="left:149px;top:1104px;height:26px;line-height:27px;font-size:11px">Console</span><span class="a dt" style="left:209px;top:1104px;height:26px;line-height:27px;font-size:11px">Output</span><svg class="a" style="left:254px;top:1113px" width="8" height="8" viewBox="0 0 8 8"><path d="M0.5 0.5L7.5 7.5M7.5 0.5L0.5 7.5" stroke="#6e7173" stroke-width="1"/></svg><div class="a" style="left:44px;top:1130px;width:1437px;height:1px;background:#323435"></div><div class="a" style="left:44px;top:1128px;width:74px;height:3px;background:#747a80"></div><svg class="a" style="left:284px;top:1110px" width="12" height="13" viewBox="0 0 12 13"><path d="M0 2H12M0 6.5H12M0 11H12" stroke="#606264" stroke-width="2.2"/></svg><div class="a" style="left:306px;top:1107px;width:1px;height:19px;background:#555759"></div><svg class="a" style="left:316px;top:1109px" width="14" height="14" viewBox="0 0 14 14"><path d="M1 7.6L6.7 1.9L11.6 6.8" fill="none" stroke="#606264" stroke-width="1.8"/><path d="M13 3.2V8.6H7.6Z" fill="#606264"/><path d="M1 12H13" stroke="#606264" stroke-width="2"/></svg><svg class="a" style="left:342px;top:1109px" width="14" height="14" viewBox="0 0 14 14"><path d="M7 0V6" stroke="#606264" stroke-width="2.6"/><path d="M1.7 4.8H12.3L7 9.7Z" fill="#606264"/><path d="M1.2 12H12.8" stroke="#606264" stroke-width="2"/></svg><svg class="a" style="left:368px;top:1109px" width="14" height="14" viewBox="0 0 14 14"><path d="M7 0V6" stroke="#606264" stroke-width="2.6"/><path d="M1.7 4.8H12.3L7 9.7Z" fill="#606264"/><path d="M1.2 12H12.8" stroke="#606264" stroke-width="2"/></svg><svg class="a" style="left:394px;top:1109px" width="14" height="14" viewBox="0 0 14 14"><path d="M7 5V9.8" stroke="#606264" stroke-width="2.6"/><path d="M2.6 6H11.4L7 1Z" fill="#606264"/><path d="M1.2 12H12.8" stroke="#606264" stroke-width="2"/></svg><svg class="a" style="left:420px;top:1109px" width="16" height="15" viewBox="0 0 16 15"><path d="M1 1L8 8" stroke="#606264" stroke-width="1.8"/><path d="M9.5 3V9.5H3Z" fill="#606264"/><path d="M10.5 6.5H13.5M12 6.5V13.5M10.5 13.5H13.5" stroke="#606264" stroke-width="1" fill="none"/></svg><div class="a" style="left:443px;top:1107px;width:1px;height:19px;background:#555759"></div><svg class="a" style="left:453px;top:1109px" width="14" height="14" viewBox="0 0 14 14"><rect x="0.5" y="0.5" width="13" height="13" fill="#606264"/><g fill="#3c3f41"><rect x="2" y="2" width="10" height="2.6"/><rect x="2" y="6" width="2.6" height="2.4"/><rect x="5.7" y="6" width="2.6" height="2.4"/><rect x="9.4" y="6" width="2.6" height="2.4"/><rect x="2" y="9.6" width="2.6" height="2.4"/><rect x="5.7" y="9.6" width="2.6" height="2.4"/><rect x="9.4" y="9.6" width="2.6" height="2.4"/></g></svg><div class="a" style="left:475px;top:1105px;width:22px;height:22px;border-radius:3px;background:#5c6062"></div><svg class="a" style="left:478px;top:1108px" width="16" height="16" viewBox="0 0 16 16"><path d="M8 1L15 8L8 15L1 8Z" fill="#e2aa4c"/><text x="8" y="10.8" font-size="8" font-family="Liberation Sans, sans-serif" fill="#4a3410" text-anchor="middle">C</text></svg><svg class="a" style="left:504px;top:1108px" width="16" height="16" viewBox="0 0 16 16"><circle cx="8" cy="8" r="7" fill="#c9933f"/><text x="8" y="10.6" font-size="8.5" font-family="Liberation Sans, sans-serif" fill="#4a3410" text-anchor="middle">@</text></svg><svg class="a" style="left:530px;top:1108px" width="15" height="16" viewBox="0 0 15 16"><path d="M6 3.5H14.5M6 8H14.5M6 12.5H14.5" stroke="#3a9ad9" stroke-width="2"/><g font-size="5" font-family="Liberation Sans, sans-serif" fill="#c8cacb"><text x="0.5" y="5.2">1</text><text x="0.5" y="9.8">2</text><text x="0.5" y="14.4">3</text></g></svg><svg class="a" style="left:559px;top:1109px" width="14" height="16" viewBox="0 0 14 16"><path d="M0 2H10.5M0 6.5H10.5M0 11H4" stroke="#c4c6c7" stroke-width="1.8"/><path d="M5 11.5H13M9 7.5V15.5" stroke="#e25555" stroke-width="2"/></svg><span class="a dt" style="left:57px;top:1131px;height:26px;line-height:27px;font-size:11px">Frames</span><div class="a" style="left:541px;top:1131px;width:1px;height:26px;background:#323435"></div><span class="a dt" style="left:555px;top:1131px;height:26px;line-height:27px;font-size:11px">Variables</span><svg class="a" style="left:0;top:0;pointer-events:none" width="1481" height="1157" viewBox="0 0 1481 1157"><rect x="451" y="368.1" width="472.3" height="166.2" rx="4" ry="4" fill="none" stroke="#ee3726" stroke-width="3.2"/><path d="M893.7 384.6L921.5 376.2L919.5 383.6L1022.6 414.6Q1025.5 417.6 1021.2 420.6L916.2 398.8L914.8 405.9Z" fill="#ee3726"/><path d="M778.9 492.6L805.4 480.2L804.6 488.4L1020.4 509.2Q1024 512 1020.4 515L803.2 504L802.4 510.7Z" fill="#ee3726"/><path d="M663.2 773.4L680.8 777.4L676.4 779.9L713.8 820.2Q714.2 822.6 711.4 822.9L669.8 787.3L667.4 791.1Z" fill="#ee3726"/></svg><span class="a ann" style="left:1058px;top:414px">获取<span style="margin-left:3px;letter-spacing:0.55px">t_type</span></span><span class="a ann" style="left:1041px;top:496px">拼接</span><span class="a ann" style="left:725px;top:817px">带入</span><div id="wm" class="a"><div class="wm" style="left:-45.0px;top:38.3px">零组资料文库</div><div class="wm" style="left:-93.2px;top:161.8px">零组资料文库</div><div class="wm" style="left:-141.4px;top:285.3px">零组资料文库</div><div class="wm" style="left:86.5px;top:58.3px">零组资料文库</div><div class="wm" style="left:38.3px;top:181.8px">零组资料文库</div><div class="wm" style="left:-9.9px;top:305.3px">零组资料文库</div><div class="wm" style="left:-58.1px;top:428.8px">零组资料文库</div><div class="wm" style="left:-106.3px;top:552.3px">零组资料文库</div><div class="wm" style="left:-154.5px;top:675.8px">零组资料文库</div><div class="wm" style="left:218.0px;top:78.3px">零组资料文库</div><div class="wm" style="left:169.8px;top:201.8px">零组资料文库</div><div class="wm" style="left:121.6px;top:325.3px">零组资料文库</div><div class="wm" style="left:73.4px;top:448.8px">零组资料文库</div><div class="wm" style="left:25.2px;top:572.3px">零组资料文库</div><div class="wm" style="left:-23.0px;top:695.8px">零组资料文库</div><div class="wm" style="left:-71.2px;top:819.3px">零组资料文库</div><div class="wm" style="left:-119.4px;top:942.8px">零组资料文库</div><div class="wm" style="left:-167.6px;top:1066.3px">零组资料文库</div><div class="wm" style="left:397.7px;top:-25.2px">零组资料文库</div><div class="wm" style="left:349.5px;top:98.3px">零组资料文库</div><div class="wm" style="left:301.3px;top:221.8px">零组资料文库</div><div class="wm" style="left:253.1px;top:345.3px">零组资料文库</div><div class="wm" style="left:204.9px;top:468.8px">零组资料文库</div><div class="wm" style="left:156.7px;top:592.3px">零组资料文库</div><div class="wm" style="left:108.5px;top:715.8px">零组资料文库</div><div class="wm" style="left:60.3px;top:839.3px">零组资料文库</div><div class="wm" style="left:12.1px;top:962.8px">零组资料文库</div><div class="wm" style="left:-36.1px;top:1086.3px">零组资料文库</div><div class="wm" style="left:-84.3px;top:1209.8px">零组资料文库</div><div class="wm" style="left:529.2px;top:-5.2px">零组资料文库</div><div class="wm" style="left:481.0px;top:118.3px">零组资料文库</div><div class="wm" style="left:432.8px;top:241.8px">零组资料文库</div><div class="wm" style="left:384.6px;top:365.3px">零组资料文库</div><div class="wm" style="left:336.4px;top:488.8px">零组资料文库</div><div class="wm" style="left:288.2px;top:612.3px">零组资料文库</div><div class="wm" style="left:240.0px;top:735.8px">零组资料文库</div><div class="wm" style="left:191.8px;top:859.3px">零组资料文库</div><div class="wm" style="left:143.6px;top:982.8px">零组资料文库</div><div class="wm" style="left:95.4px;top:1106.3px">零组资料文库</div><div class="wm" style="left:47.2px;top:1229.8px">零组资料文库</div><div class="wm" style="left:660.7px;top:14.8px">零组资料文库</div><div class="wm" style="left:612.5px;top:138.3px">零组资料文库</div><div class="wm" style="left:564.3px;top:261.8px">零组资料文库</div><div class="wm" style="left:516.1px;top:385.3px">零组资料文库</div><div class="wm" style="left:467.9px;top:508.8px">零组资料文库</div><div class="wm" style="left:419.7px;top:632.3px">零组资料文库</div><div class="wm" style="left:371.5px;top:755.8px">零组资料文库</div><div class="wm" style="left:323.3px;top:879.3px">零组资料文库</div><div class="wm" style="left:275.1px;top:1002.8px">零组资料文库</div><div class="wm" style="left:226.9px;top:1126.3px">零组资料文库</div><div class="wm" style="left:792.2px;top:34.8px">零组资料文库</div><div class="wm" style="left:744.0px;top:158.3px">零组资料文库</div><div class="wm" style="left:695.8px;top:281.8px">零组资料文库</div><div class="wm" style="left:647.6px;top:405.3px">零组资料文库</div><div class="wm" style="left:599.4px;top:528.8px">零组资料文库</div><div class="wm" style="left:551.2px;top:652.3px">零组资料文库</div><div class="wm" style="left:503.0px;top:775.8px">零组资料文库</div><div class="wm" style="left:454.8px;top:899.3px">零组资料文库</div><div class="wm" style="left:406.6px;top:1022.8px">零组资料文库</div><div class="wm" style="left:358.4px;top:1146.3px">零组资料文库</div><div class="wm" style="left:923.7px;top:54.8px">零组资料文库</div><div class="wm" style="left:875.5px;top:178.3px">零组资料文库</div><div class="wm" style="left:827.3px;top:301.8px">零组资料文库</div><div class="wm" style="left:779.1px;top:425.3px">零组资料文库</div><div class="wm" style="left:730.9px;top:548.8px">零组资料文库</div><div class="wm" style="left:682.7px;top:672.3px">零组资料文库</div><div class="wm" style="left:634.5px;top:795.8px">零组资料文库</div><div class="wm" style="left:586.3px;top:919.3px">零组资料文库</div><div class="wm" style="left:538.1px;top:1042.8px">零组资料文库</div><div class="wm" style="left:489.9px;top:1166.3px">零组资料文库</div><div class="wm" style="left:1055.2px;top:74.8px">零组资料文库</div><div class="wm" style="left:1007.0px;top:198.3px">零组资料文库</div><div class="wm" style="left:958.8px;top:321.8px">零组资料文库</div><div class="wm" style="left:910.6px;top:445.3px">零组资料文库</div><div class="wm" style="left:862.4px;top:568.8px">零组资料文库</div><div class="wm" style="left:814.2px;top:692.3px">零组资料文库</div><div class="wm" style="left:766.0px;top:815.8px">零组资料文库</div><div class="wm" style="left:717.8px;top:939.3px">零组资料文库</div><div class="wm" style="left:669.6px;top:1062.8px">零组资料文库</div><div class="wm" style="left:621.4px;top:1186.3px">零组资料文库</div><div class="wm" style="left:1234.9px;top:-28.7px">零组资料文库</div><div class="wm" style="left:1186.7px;top:94.8px">零组资料文库</div><div class="wm" style="left:1138.5px;top:218.3px">零组资料文库</div><div class="wm" style="left:1090.3px;top:341.8px">零组资料文库</div><div class="wm" style="left:1042.1px;top:465.3px">零组资料文库</div><div class="wm" style="left:993.9px;top:588.8px">零组资料文库</div><div class="wm" style="left:945.7px;top:712.3px">零组资料文库</div><div class="wm" style="left:897.5px;top:835.8px">零组资料文库</div><div class="wm" style="left:849.3px;top:959.3px">零组资料文库</div><div class="wm" style="left:801.1px;top:1082.8px">零组资料文库</div><div class="wm" style="left:752.9px;top:1206.3px">零组资料文库</div><div class="wm" style="left:1366.4px;top:-8.7px">零组资料文库</div><div class="wm" style="left:1318.2px;top:114.8px">零组资料文库</div><div class="wm" style="left:1270.0px;top:238.3px">零组资料文库</div><div class="wm" style="left:1221.8px;top:361.8px">零组资料文库</div><div class="wm" style="left:1173.6px;top:485.3px">零组资料文库</div><div class="wm" style="left:1125.4px;top:608.8px">零组资料文库</div><div class="wm" style="left:1077.2px;top:732.3px">零组资料文库</div><div class="wm" style="left:1029.0px;top:855.8px">零组资料文库</div><div class="wm" style="left:980.8px;top:979.3px">零组资料文库</div><div class="wm" style="left:932.6px;top:1102.8px">零组资料文库</div><div class="wm" style="left:884.4px;top:1226.3px">零组资料文库</div><div class="wm" style="left:1449.7px;top:134.8px">零组资料文库</div><div class="wm" style="left:1401.5px;top:258.3px">零组资料文库</div><div class="wm" style="left:1353.3px;top:381.8px">零组资料文库</div><div class="wm" style="left:1305.1px;top:505.3px">零组资料文库</div><div class="wm" style="left:1256.9px;top:628.8px">零组资料文库</div><div class="wm" style="left:1208.7px;top:752.3px">零组资料文库</div><div class="wm" style="left:1160.5px;top:875.8px">零组资料文库</div><div class="wm" style="left:1112.3px;top:999.3px">零组资料文库</div><div class="wm" style="left:1064.1px;top:1122.8px">零组资料文库</div><div class="wm" style="left:1484.8px;top:401.8px">零组资料文库</div><div class="wm" style="left:1436.6px;top:525.3px">零组资料文库</div><div class="wm" style="left:1388.4px;top:648.8px">零组资料文库</div><div class="wm" style="left:1340.2px;top:772.3px">零组资料文库</div><div class="wm" style="left:1292.0px;top:895.8px">零组资料文库</div><div class="wm" style="left:1243.8px;top:1019.3px">零组资料文库</div><div class="wm" style="left:1195.6px;top:1142.8px">零组资料文库</div><div class="wm" style="left:1471.7px;top:792.3px">零组资料文库</div><div class="wm" style="left:1423.5px;top:915.8px">零组资料文库</div><div class="wm" style="left:1375.3px;top:1039.3px">零组资料文库</div><div class="wm" style="left:1327.1px;top:1162.8px">零组资料文库</div><div class="wm" style="left:1458.6px;top:1182.8px">零组资料文库</div></div><svg class="a" style="left:1030px;top:1045px" width="100" height="110" viewBox="1030 1045 100 110"><path d="M1037.3 1066.4H1087L1037.3 1148.5Z" fill="#ffffff" fill-opacity="0.33"/><path d="M1116.3 1050V1132.3H1066.6Z" fill="#ffffff" fill-opacity="0.33"/></svg><div class="a" id="logotxt">先知社区</div></div></body></html>
